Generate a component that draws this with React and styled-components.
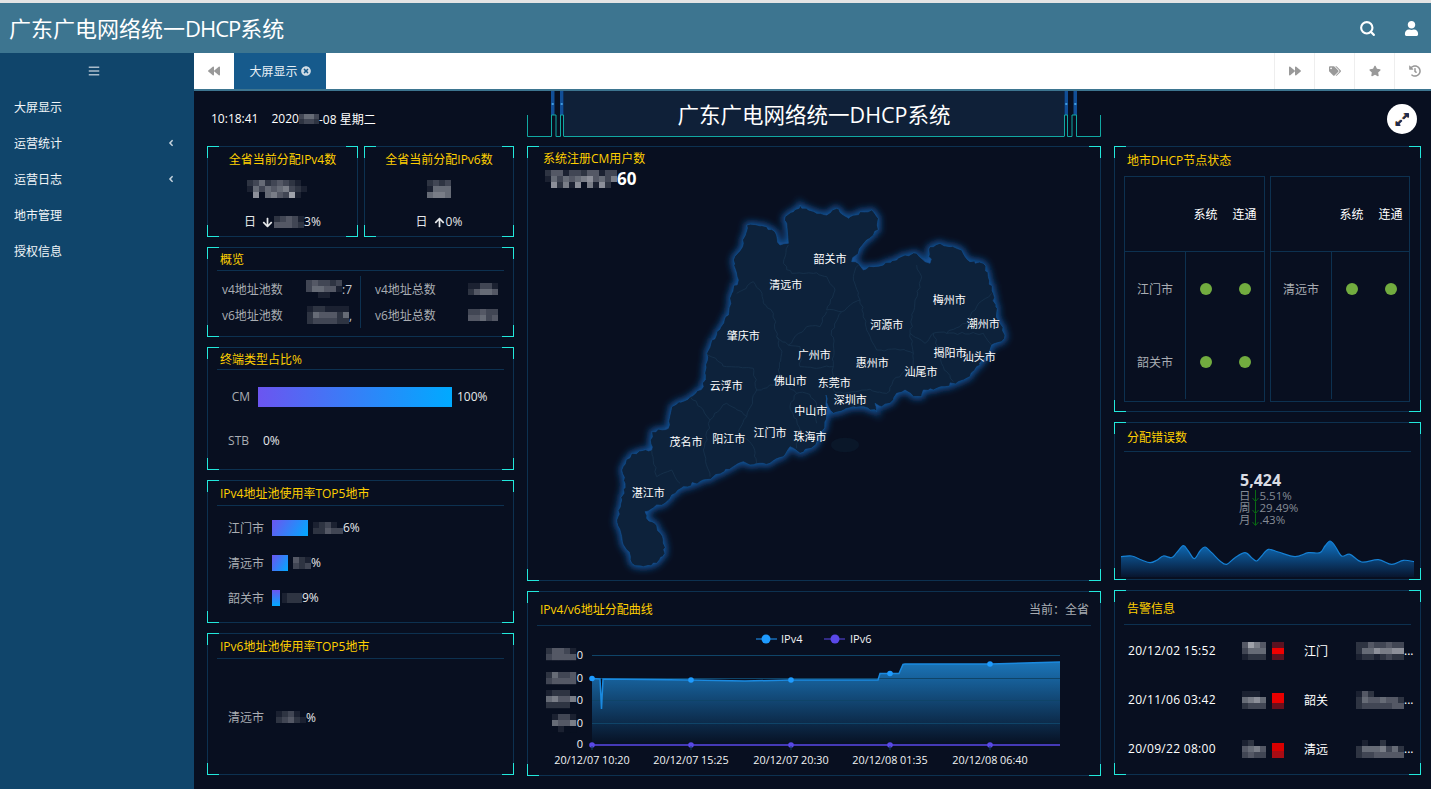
import React from "react";
import styled, { createGlobalStyle } from "styled-components";
import { Search } from "lucide-react";
import {
  FaUser, FaBars, FaBackward, FaForward, FaTags, FaStar, FaHistory,
  FaAngleLeft, FaTimesCircle, FaExpandAlt, FaArrowDown, FaArrowUp,
} from "react-icons/fa";

const GlobalStyle = createGlobalStyle`
  html, body { margin: 0; padding: 0; height: 100%; overflow: hidden; }
  body {
    background: #080f20;
    font-family: "Open Sans", "Noto Sans CJK SC", "Liberation Sans", sans-serif;
    font-size: 12px;
    color: #fff;
  }
  * { box-sizing: border-box; }
`;

const CORNER = "#22e8dc";
const LINE = "#0d3150";
const YELLOW = "#ffcf00";

const Page = styled.div`
  width: 1431px;
  height: 789px;
  display: flex;
  flex-direction: column;
  overflow: hidden;
`;

const TopBar = styled.header`
  height: 53px;
  flex: none;
  background: #3d7590;
  border-top: 3px solid #e4e4e4;
  display: flex;
  align-items: center;
  padding: 0 12px 0 9px;
  h1 {
    margin: 0;
    flex: 1;
    font-size: 22px;
    font-weight: 400;
    line-height: 50px;
  }
`;

const Tight = styled.span`
  letter-spacing: -1px;
`;

const TopIcon = styled.span`
  display: flex;
  margin-left: 28px;
  font-size: 15px;
`;

const Body = styled.div`
  flex: 1;
  display: flex;
  min-height: 0;
`;

const Sidebar = styled.aside`
  width: 194px;
  flex: none;
  background: #10456b;
`;

const Burger = styled.div`
  height: 36px;
  display: flex;
  align-items: center;
  justify-content: center;
  padding-right: 6px;
  color: #a9bccb;
  font-size: 12px;
`;

const MenuItem = styled.div`
  height: 36px;
  display: flex;
  align-items: center;
  justify-content: space-between;
  padding: 0 18px 0 14px;
  font-size: 12px;
  color: #f1f5f8;
  svg { font-size: 10px; color: #c4d2dc; }
`;

const Main = styled.main`
  flex: 1;
  display: flex;
  flex-direction: column;
  min-width: 0;
`;

const TabBar = styled.nav`
  height: 38px;
  flex: none;
  margin-right: -3px;
  background: #fff;
  border-bottom: 2px solid #3d7590;
  display: flex;
`;

const TabButton = styled.div`
  width: 40px;
  display: flex;
  align-items: center;
  justify-content: center;
  color: #999;
  font-size: 12px;
  border-left: ${(p) => (p.$bordered ? "1px solid #eee" : "none")};
`;

const ActiveTab = styled.div`
  width: 92px;
  background: #165a8c;
  color: #e8f0f6;
  display: flex;
  align-items: center;
  justify-content: center;
  gap: 3px;
  svg { font-size: 10px; color: #cfdbe4; }
`;

const TabSpacer = styled.div`
  flex: 1;
`;

const Content = styled.div`
  flex: 1;
  background: #080f20;
  display: grid;
  grid-template-columns: 307px 574px 307px;
  grid-template-rows: 55px 1fr;
  column-gap: 13px;
  padding: 0 10px 0 13px;
`;

const Clock = styled.div`
  display: flex;
  align-items: center;
  gap: 13px;
  padding: 0 0 0 4px;
  font-size: 12px;
  color: #fff;
`;

const ClockDate = styled.span`
  display: flex;
  align-items: center;
  white-space: pre;
`;

const Banner = styled.div`
  display: flex;
  height: 46px;
`;

const BannerTitle = styled.div`
  flex: 1;
  background: #0f2038;
  border-bottom: 1px solid #11a8a2;
  display: flex;
  align-items: center;
  justify-content: center;
  font-size: 21.5px;
  padding-bottom: 1px;
`;

const ExpandCell = styled.div`
  display: flex;
  justify-content: flex-end;
  align-items: flex-start;
  padding: 13px 4px 0 0;
`;

const ExpandButton = styled.div`
  width: 30px;
  height: 30px;
  border-radius: 50%;
  background: #fff;
  color: #1b2a55;
  display: flex;
  align-items: center;
  justify-content: center;
  font-size: 15px;
  svg { filter: drop-shadow(-0.7px 0.7px 0 #d98a2e); }
`;

const Column = styled.div`
  display: grid;
  grid-template-rows: ${(p) => p.$rows};
  row-gap: 10px;
  align-content: start;
`;

const Pair = styled.div`
  display: grid;
  grid-template-columns: 151px 150px;
  column-gap: 6px;
`;

const corner = (pos, w, h) => `linear-gradient(${CORNER}, ${CORNER}) ${pos} / ${w} ${h} no-repeat`;
const edge = (pos, w, h) => `linear-gradient(${LINE}, ${LINE}) ${pos} / ${w} ${h} no-repeat`;

const Panel = styled.section`
  padding: 1px;
  min-width: 0;
  background:
    ${corner("left top", "12px", "1px")},
    ${corner("left top", "1px", "12px")},
    ${corner("right top", "12px", "1px")},
    ${corner("right top", "1px", "12px")},
    ${corner("left bottom", "12px", "1px")},
    ${corner("left bottom", "1px", "12px")},
    ${corner("right bottom", "12px", "1px")},
    ${corner("right bottom", "1px", "12px")},
    ${edge("left top", "100%", "1px")},
    ${edge("left bottom", "100%", "1px")},
    ${edge("left top", "1px", "100%")},
    ${edge("right top", "1px", "100%")};
  display: flex;
  flex-direction: column;
`;

const PanelHead = styled.div`
  height: ${(p) => p.$h || 25}px;
  flex: none;
  margin: 0 9px;
  padding: 0 2px 0 3px;
  border-bottom: 1px solid ${LINE};
  display: flex;
  align-items: center;
  justify-content: space-between;
  color: ${YELLOW};
  font-size: 12px;
  span { color: #a9adb3; }
`;

const StatPanel = styled(Panel)`
  align-items: center;
  padding-top: 5px;
`;

const StatTitle = styled.div`
  color: ${YELLOW};
  line-height: 18px;
`;

const StatValue = styled.div`
  height: 18px;
  margin-top: 11px;
  display: flex;
  justify-content: center;
`;

const StatTrend = styled.div`
  margin-top: 16px;
  display: flex;
  align-items: center;
  line-height: 16px;
  color: #e6e8ea;
  svg { font-size: 11px; margin: 0 1px 0 6px; }
`;

const Overview = styled.div`
  flex: 1;
  display: grid;
  grid-template-columns: 1fr 1fr;
  padding: 5px 15px 8px 14px;
`;

const OverviewSide = styled.div`
  display: grid;
  grid-template-rows: 1fr 1fr;
  padding-left: ${(p) => (p.$right ? "14px" : "0")};
  border-left: ${(p) => (p.$right ? `1px solid ${LINE}` : "none")};
`;

const OverviewRow = styled.div`
  display: flex;
  align-items: center;
  justify-content: space-between;
  color: #a9adb3;
  padding-right: ${(p) => (p.$right ? "0" : "8px")};
  b { display: flex; align-items: center; font-weight: 400; color: #c8cbd0; }
`;

const Bars = styled.div`
  flex: 1;
  display: flex;
  flex-direction: column;
  justify-content: center;
  padding: ${(p) => p.$pt || 0}px 0 ${(p) => p.$pb || 0}px;
  gap: ${(p) => p.$gap || 0}px;
`;

const BarRow = styled.div`
  display: flex;
  align-items: center;
  height: 20px;
`;

const BarLabel = styled.div`
  width: ${(p) => p.$w}px;
  flex: none;
  text-align: right;
  color: #a9adb3;
`;

const Bar = styled.div`
  height: ${(p) => p.$h}px;
  width: ${(p) => p.$w}px;
  flex: none;
  margin-left: 8px;
  background: linear-gradient(${(p) => p.$angle || "90deg"}, #6b55f0, #00aaff);
`;

const BarValue = styled.div`
  margin-left: ${(p) => p.$ml ?? 5}px;
  display: flex;
  align-items: center;
  color: #e6e8ea;
`;

const MapHead = styled.div`
  height: 42.5px;
  flex: none;
  padding: 3px 0 0 15px;
  color: ${YELLOW};
  line-height: 17px;
`;

const MapCount = styled.div`
  display: flex;
  align-items: center;
  margin: 3px 0 0 2px;
  color: #fff;
  font-size: 17px;
  font-weight: 700;
  line-height: 18px;
`;

const MapCanvas = styled.div`
  position: relative;
  width: 420px;
  height: 390px;
  margin-left: 72px;
  svg { display: block; overflow: visible; }
`;

const MapLabel = styled.span`
  position: absolute;
  transform: translate(-50%, -50%);
  font-size: 11px;
  color: #fff;
  white-space: nowrap;
`;

const NodeHead = styled.div`
  height: 29px;
  flex: none;
  padding: 5px 0 0 12px;
  color: ${YELLOW};
  line-height: 17px;
`;

const NodeTables = styled.div`
  display: grid;
  grid-template-columns: 141px 140px;
  column-gap: 5px;
  margin-left: 9px;
`;

const NodeTable = styled.div`
  height: 226px;
  border: 1px solid ${LINE};
  display: grid;
  grid-template-rows: 74px 74px 74px;
`;

const NodeRow = styled.div`
  display: grid;
  grid-template-columns: 61px 39px 39px;
  align-items: center;
  justify-items: center;
  border-top: ${(p) => (p.$first ? `1px solid ${LINE}` : "none")};
  color: ${(p) => (p.$head ? "#fff" : "#a9adb3")};
`;

const NodeCity = styled.div`
  align-self: stretch;
  justify-self: stretch;
  display: flex;
  align-items: center;
  justify-content: center;
  border-right: 1px solid ${LINE};
`;

const Dot = styled.i`
  width: 12px;
  height: 12px;
  border-radius: 50%;
  background: #72ac3f;
`;

const ErrorBody = styled.div`
  flex: 1;
  display: flex;
  flex-direction: column;
  align-items: flex-start;
  padding: 19px 0 0 124px;
  position: relative;
`;

const ErrorTotal = styled.div`
  font-size: 16px;
  font-weight: 700;
  line-height: 18px;
  margin-left: 1px;
  color: #d9dce3;
`;

const ErrorLine = styled.div`
  display: flex;
  align-items: center;
  height: 12px;
  line-height: 12px;
  font-size: 11.5px;
  color: #858b95;
  margin-top: ${(p) => (p.$first ? "1px" : "0")};
  svg { margin: 0 1px 0 1px; }
`;

const SparkWrap = styled.svg`
  position: absolute;
  left: 6px;
  bottom: 2px;
`;

const AlertList = styled.div`
  flex: 1;
  display: grid;
  grid-template-rows: repeat(3, 49px);
  padding: 1px 5px 0 13px;
`;

const AlertRow = styled.div`
  display: flex;
  align-items: center;
  color: #fff;
`;

const AlertTime = styled.div`
  width: 114px;
  flex: none;
  letter-spacing: 0.3px;
`;

const Alarm = styled.div`
  width: 12px;
  height: 18px;
  margin: 0 20px 0 6px;
  flex: none;
  background: ${(p) => p.$bg};
`;

const AlertCity = styled.div`
  width: 52px;
  flex: none;
`;

const AlertMore = styled.div`
  display: flex;
  align-items: center;
`;

const Grid = styled.span`
  display: inline-grid;
  grid-template-columns: repeat(${(p) => p.$cols}, ${(p) => p.$size}px);
  grid-auto-rows: ${(p) => p.$size}px;
  flex: none;
`;

const Tile = styled.span`
  background: ${(p) => p.$c};
`;

const shade = (d) => {
  const t = Number(d) / 9;
  const r = Math.round(8 + t * 170);
  const g = Math.round(15 + t * 165);
  const b = Math.round(32 + t * 155);
  return `rgb(${r},${g},${b})`;
};

// the screenshot hides some figures under a mosaic: each digit is one tile
function Mosaic({ rows, size = 6 }) {
  const lines = rows.split("|");
  return (
    <Grid $cols={lines[0].length} $size={size}>
      {lines.join("").split("").map((d, i) => <Tile key={i} $c={shade(d)} />)}
    </Grid>
  );
}

function SvgMosaic({ x, y, rows }) {
  return rows.split("|").flatMap((line, r) =>
    line.split("").map((d, c) => (
      <rect key={`${r}-${c}`} x={x + c * 6} y={y + r * 6} width="6.2" height="6.2" fill={shade(d)} />
    ))
  );
}

const smooth = (pts) => {
  let d = `M${pts[0][0]},${pts[0][1]}`;
  for (let i = 0; i < pts.length - 1; i++) {
    const p0 = pts[i - 1] || pts[i];
    const p1 = pts[i];
    const p2 = pts[i + 1];
    const p3 = pts[i + 2] || p2;
    d += ` C${p1[0] + (p2[0] - p0[0]) / 6},${p1[1] + (p2[1] - p0[1]) / 6} ${p2[0] - (p3[0] - p1[0]) / 6},${p2[1] - (p3[1] - p1[1]) / 6} ${p2[0]},${p2[1]}`;
  }
  return d;
};

// breaks the straight map segments up so that borders wander like a real map
const roughen = (d, amp) => {
  let out = "";
  let prev = null;
  let n = 1;
  const noise = () => {
    n += 1;
    const v = Math.sin(n * 12.9898) * 43758.5453;
    return (v - Math.floor(v) - 0.5) * amp;
  };
  for (const [, cmd, sx, sy] of d.matchAll(/([MLZ])(?:(\d+),(\d+))?/g)) {
    if (cmd === "Z") { out += " Z"; continue; }
    const x = Number(sx);
    const y = Number(sy);
    if (cmd === "L" && prev) {
      const steps = Math.max(1, Math.round(Math.hypot(x - prev[0], y - prev[1]) / 11));
      for (let i = 1; i < steps; i++) {
        const t = i / steps;
        out += ` L${(prev[0] + (x - prev[0]) * t + noise()).toFixed(1)},${(prev[1] + (y - prev[1]) * t + noise()).toFixed(1)}`;
      }
    }
    out += ` ${cmd}${x},${y}`;
    prev = [x, y];
  }
  return out;
};

const GD_OUTLINE = roughen("M560,100 L555,80 L580,65 L600,45 L625,60 L650,70 L680,75 L710,55 L730,75 L745,85 L780,65 L815,60 L835,85 L835,120 L800,150 L775,190 L755,215 L775,220 L790,240 L820,230 L850,225 L890,210 L915,195 L950,190 L975,215 L990,220 L990,170 L1020,160 L1050,170 L1085,180 L1110,215 L1150,220 L1165,260 L1180,310 L1190,370 L1200,400 L1215,435 L1205,455 L1175,465 L1170,480 L1150,510 L1130,530 L1110,560 L1075,575 L1035,590 L1000,600 L970,600 L965,620 L940,620 L915,600 L890,610 L870,640 L845,650 L825,640 L830,665 L810,660 L790,650 L760,650 L700,670 L685,650 L678,615 L680,680 L660,740 L640,770 L600,790 L570,770 L550,800 L510,820 L490,820 L450,825 L430,815 L400,830 L340,860 L300,875 L250,890 L215,915 L195,940 L170,945 L135,965 L140,985 L165,1000 L190,1050 L195,1090 L170,1120 L130,1130 L95,1120 L80,1080 L65,1040 L50,990 L65,930 L75,880 L65,840 L95,790 L155,780 L155,725 L205,715 L215,650 L270,620 L310,590 L320,490 L350,425 L385,375 L395,310 L415,270 L400,210 L430,160 L440,105 L500,110 L525,125 L540,165 L565,160 Z", 9);

const GD_BORDERS = [
  "M565,165 L550,220 L575,250 L640,250 L680,260 L705,300 L680,360 L725,365 L780,330 L760,260 L775,225",
  "M725,365 L695,420 L700,465 L700,530 M780,330 L790,370 L800,420 L830,480 L900,480 L940,490",
  "M950,225 L965,260 L945,330 L930,430 L940,490 M930,430 L975,460 L1000,430 L1040,430 L1100,400 L1130,350 L1175,310",
  "M480,300 L460,275 L410,310 M480,300 L490,340 L520,370 L530,440 L565,465 L620,410 L660,410 L680,365",
  "M565,465 L600,470 L600,530 L650,535 L700,530 M530,440 L545,490 L535,540 L555,580 L590,610 L620,610 L650,640 L650,700",
  "M320,490 L380,530 L460,535 L470,600 L530,580 M470,600 L440,680 L380,640 L330,690 L310,660 L270,620",
  "M440,680 L415,725 L460,770 L470,820 M330,690 L310,780 L330,860 M155,780 L170,860 L215,840 L240,880 M590,610 L570,650 L600,720 L590,775",
  "M700,530 L700,600 L730,610 L800,600 L860,610 L880,570 L940,530 L940,490 M1000,430 L1030,530 L1060,575 M1040,430 L1150,430 L1175,465",
].map((d) => roughen(d, 8));

const CITIES = [
  ["韶关市", 690, 205], ["清远市", 557, 283], ["梅州市", 1048, 327], ["潮州市", 1150, 400],
  ["河源市", 860, 402], ["肇庆市", 430, 435], ["广州市", 643, 492], ["揭阳市", 1050, 486],
  ["汕头市", 1138, 498], ["惠州市", 817, 516], ["汕尾市", 963, 543], ["佛山市", 571, 571],
  ["东莞市", 703, 576], ["云浮市", 379, 585], ["深圳市", 751, 627], ["中山市", 632, 660],
  ["江门市", 510, 727], ["珠海市", 630, 738], ["阳江市", 386, 744], ["茂名市", 258, 753],
  ["湛江市", 145, 908],
];

function GuangdongMap() {
  return (
    <MapCanvas>
      <svg width="420" height="390" viewBox="0 0 1260 1170">
        <defs>
          <filter id="gdGlow" x="-10%" y="-10%" width="120%" height="120%">
            <feGaussianBlur stdDeviation="11" />
          </filter>
          <filter id="gdInner" x="-10%" y="-10%" width="120%" height="120%">
            <feGaussianBlur stdDeviation="2" />
          </filter>
        </defs>
        <path d={GD_OUTLINE} fill="#14579f" stroke="#14579f" strokeWidth="14" filter="url(#gdGlow)" />
        <path d={GD_OUTLINE} fill="#10223a" stroke="#134d8c" strokeWidth="2" strokeLinejoin="round" filter="url(#gdInner)" />
        {GD_BORDERS.map((d) => (
          <path key={d} d={d} fill="none" stroke="#1a3652" strokeWidth="2" />
        ))}
        <ellipse cx="735" cy="765" rx="42" ry="22" fill="#0a1729" />
      </svg>
      {CITIES.map(([name, x, y]) => (
        <MapLabel key={name} style={{ left: x / 3, top: y / 3 }}>{name}</MapLabel>
      ))}
    </MapCanvas>
  );
}

function BannerDeco({ flip }) {
  return (
    <svg width="37" height="46" viewBox="0 0 37 46" style={{ transform: flip ? "scaleX(-1)" : "none", flex: "none" }}>
      <rect x="24" y="0" width="3.5" height="24" fill="#114e96" />
      <rect x="33" y="0" width="3.5" height="24" fill="#114e96" />
      <rect x="24.7" y="12" width="2" height="2" fill="#3f9be0" />
      <rect x="33.7" y="12" width="2" height="2" fill="#3f9be0" />
      <path d="M0.5,24 V45.5 H24.5 V24 M24.5,24 H29 V45.5 H33.5 V24 H36.5 V45.5" fill="none" stroke="#11a8a2" strokeWidth="1" />
    </svg>
  );
}

function ThinDown() {
  return (
    <svg width="7" height="12" viewBox="0 0 7 12">
      <path d="M3.5,0 V11 M0.5,8 L3.5,11.5 L6.5,8" fill="none" stroke="#0a6a14" strokeWidth="1" />
    </svg>
  );
}

const LINE_POINTS = "592,678.5 600,679 601.5,709 603,679 691,680 745,681 791,680 878,680 880,673.5 899,673.5 903,664.5 905,664 990,664 1060,662";
const MARKS = [592, 691, 791, 890, 990];
const MARK_Y = [678.5, 680, 680, 673.5, 664];
const STAMPS = ["20/12/07 10:20", "20/12/07 15:25", "20/12/07 20:30", "20/12/08 01:35", "20/12/08 06:40"];

function AddressChart() {
  return (
    <svg width="572" height="149" viewBox="528 626 572 149" style={{ display: "block", flex: "none" }}>
      <defs>
        <linearGradient id="areaFill" x1="0" y1="0" x2="0" y2="1">
          <stop offset="0" stopColor="#1b75b9" />
          <stop offset="1" stopColor="#071022" />
        </linearGradient>
      </defs>
      <polygon points={`${LINE_POINTS} 1060,745 592,745`} fill="url(#areaFill)" />
      {[655, 678, 700, 723].map((y) => (
        <line key={y} x1="592" x2="1060" y1={y + 0.5} y2={y + 0.5} stroke="#0f4468" strokeWidth="1" />
      ))}
      <polyline points={LINE_POINTS} fill="none" stroke="#1a8ae0" strokeWidth="1.5" />
      <line x1="592" x2="1060" y1="745" y2="745" stroke="#5a48e8" strokeWidth="1.5" />
      {MARKS.map((x, i) => (
        <g key={x}>
          <circle cx={x} cy={MARK_Y[i]} r="2.8" fill="#1e9bff" />
          <circle cx={x} cy="745" r="2.8" fill="#5a48e8" />
          <line x1={x} x2={x} y1="746" y2="750" stroke="#0f4468" />
          <text x={x} y="764" fontSize="10.8" fill="#f2f3f5" textAnchor="middle">{STAMPS[i]}</text>
        </g>
      ))}
      <SvgMosaic x={546} y={648} rows="24431|34444" />
      <SvgMosaic x={546} y={672} rows="25334|34444" />
      <SvgMosaic x={546} y={690} rows="12220|56446|22220" />
      <SvgMosaic x={552} y={714} rows="1331|5446|0100" />
      {[659, 682, 704, 727, 748].map((y) => (
        <text key={y} x="583" y={y} fontSize="11" fill="#f2f3f5" textAnchor="end">0</text>
      ))}
      <line x1="756" x2="777" y1="639" y2="639" stroke="#1e9bff" />
      <circle cx="766" cy="639" r="4.5" fill="#1e9bff" />
      <text x="781" y="643" fontSize="11" fill="#f2f3f5">IPv4</text>
      <line x1="824" x2="845" y1="639" y2="639" stroke="#5a48e8" />
      <circle cx="835" cy="639" r="4.5" fill="#5a48e8" />
      <text x="850" y="643" fontSize="11" fill="#f2f3f5">IPv6</text>
    </svg>
  );
}

const SPARK = [[0,427],[32,425],[62,437],[87,445],[107,438],[127,425],[152,430],[167,415],[187,394],[202,410],[220,433],[237,410],[252,398],[272,415],[297,440],[317,450],[342,430],[372,415],[392,430],[407,440],[422,425],[442,405],[472,413],[522,427],[562,415],[597,415],[612,395],[627,380],[642,395],[662,425],[687,420],[722,443],[772,436],[812,450],[847,438],[879,442]]
  .map(([x, y]) => [x / 3, (y - 365) / 3]);

function Sparkline() {
  const top = smooth(SPARK);
  return (
    <SparkWrap width="293" height="41" viewBox="0 0 293 41">
      <defs>
        <linearGradient id="sparkFill" x1="0" y1="0" x2="0" y2="1">
          <stop offset="0" stopColor="#0f73c4" />
          <stop offset="1" stopColor="#08152e" />
        </linearGradient>
      </defs>
      <path d={`${top} L293,41 L0,41 Z`} fill="url(#sparkFill)" />
      <path d={top} fill="none" stroke="#1580d4" strokeWidth="1.2" />
    </SparkWrap>
  );
}

function NodeStatus({ city, second }) {
  return (
    <NodeTable>
      <NodeRow $head>
        <span />
        <span>系统</span>
        <span>连通</span>
      </NodeRow>
      <NodeRow $first>
        <NodeCity>{city}</NodeCity>
        <Dot />
        <Dot />
      </NodeRow>
      <NodeRow>
        <NodeCity>{second}</NodeCity>
        {second && <Dot />}
        {second && <Dot />}
      </NodeRow>
    </NodeTable>
  );
}

const ALERTS = [
  { time: "20/12/02 15:52", city: "江门", alarm: "linear-gradient(#5c1220 33%, #f00000 33%, #f00000 66%, #5c1220 66%)", a: "4864|3555|1222", b: "22433433|25576677|12212322" },
  { time: "20/11/06 03:42", city: "韶关", alarm: "linear-gradient(#080f20 12%, #e80000 12%, #e80000 66%, #6a0f1c 66%)", a: "1110|5675|2333", b: "14200000|25445442|23333344" },
  { time: "20/09/22 08:00", city: "清远", alarm: "linear-gradient(#080f20 18%, #d80000 18%, #d80000 60%, #a80c14 60%)", a: "1200|4564|3433", b: "01002000|25556352|23344444" },
];

export default function App() {
  return (
    <Page>
      <GlobalStyle />
      <TopBar>
        <h1>广东广电网络统一<Tight>DHCP</Tight>系统</h1>
        <TopIcon><Search size={17} strokeWidth={3} /></TopIcon>
        <TopIcon><FaUser /></TopIcon>
      </TopBar>
      <Body>
        <Sidebar>
          <Burger><FaBars /></Burger>
          <MenuItem>大屏显示</MenuItem>
          <MenuItem>运营统计<FaAngleLeft /></MenuItem>
          <MenuItem>运营日志<FaAngleLeft /></MenuItem>
          <MenuItem>地市管理</MenuItem>
          <MenuItem>授权信息</MenuItem>
        </Sidebar>
        <Main>
          <TabBar>
            <TabButton><FaBackward /></TabButton>
            <ActiveTab>大屏显示<FaTimesCircle /></ActiveTab>
            <TabSpacer />
            <TabButton $bordered><FaForward /></TabButton>
            <TabButton $bordered><FaTags /></TabButton>
            <TabButton $bordered><FaStar /></TabButton>
            <TabButton $bordered><FaHistory /></TabButton>
          </TabBar>
          <Content>
            <Clock>
              <span>10:18:41</span>
              <ClockDate>2020<Mosaic rows="3553|2332" size={5} />-08 星期二</ClockDate>
            </Clock>
            <Banner>
              <BannerDeco />
              <BannerTitle>广东广电网络统一DHCP系统</BannerTitle>
              <BannerDeco flip />
            </Banner>
            <ExpandCell>
              <ExpandButton><FaExpandAlt /></ExpandButton>
            </ExpandCell>

            <Column $rows="91px 90px 123px 143px 142px">
              <Pair>
                <StatPanel>
                  <StatTitle>全省当前分配IPv4数</StatTitle>
                  <StatValue><Mosaic rows="235234321000|153545632100|070564381000" /></StatValue>
                  <StatTrend>日<FaArrowDown /><Mosaic rows="23431|44432" size={6} />3%</StatTrend>
                </StatPanel>
                <StatPanel>
                  <StatTitle>全省当前分配IPv6数</StatTitle>
                  <StatValue><Mosaic rows="2323|1555|5665" /></StatValue>
                  <StatTrend>日<FaArrowUp />0%</StatTrend>
                </StatPanel>
              </Pair>
              <Panel>
                <PanelHead $h={23}>概览</PanelHead>
                <Overview>
                  <OverviewSide>
                    <OverviewRow>v4地址池数<b><Mosaic rows="343323|355441|001100" />:7</b></OverviewRow>
                    <OverviewRow>v6地址池数<b><Mosaic rows="1221111|2544425|2333322" />,</b></OverviewRow>
                  </OverviewSide>
                  <OverviewSide $right>
                    <OverviewRow $right>v4地址总数<b><Mosaic rows="11331|24554" size={6} /></b></OverviewRow>
                    <OverviewRow $right>v6地址总数<b><Mosaic rows="33433|44534" size={6} /></b></OverviewRow>
                  </OverviewSide>
                </Overview>
              </Panel>
              <Panel>
                <PanelHead $h={22}>终端类型占比%</PanelHead>
                <Bars $gap={24} $pb={2}>
                  <BarRow>
                    <BarLabel $w={42}>CM</BarLabel>
                    <Bar $h={20} $w={194} />
                    <BarValue>100%</BarValue>
                  </BarRow>
                  <BarRow>
                    <BarLabel $w={41}>STB</BarLabel>
                    <BarValue $ml={14}>0%</BarValue>
                  </BarRow>
                </Bars>
              </Panel>
              <Panel>
                <PanelHead>IPv4地址池使用率TOP5地市</PanelHead>
                <Bars $gap={15} $pb={3}>
                  <BarRow>
                    <BarLabel $w={56}>江门市</BarLabel>
                    <Bar $h={16} $w={36} $angle="120deg" />
                    <BarValue><Mosaic rows="12310|22433" size={6} />6%</BarValue>
                  </BarRow>
                  <BarRow>
                    <BarLabel $w={56}>清远市</BarLabel>
                    <Bar $h={16} $w={16} $angle="120deg" />
                    <BarValue><Mosaic rows="421|323" size={6} />%</BarValue>
                  </BarRow>
                  <BarRow>
                    <BarLabel $w={56}>韶关市</BarLabel>
                    <Bar $h={16} $w={8} $angle="180deg" />
                    <BarValue $ml={2}><Mosaic rows="1222|1222" size={5} />9%</BarValue>
                  </BarRow>
                </Bars>
              </Panel>
              <Panel>
                <PanelHead>IPv6地址池使用率TOP5地市</PanelHead>
                <Bars $pt={1}>
                  <BarRow>
                    <BarLabel $w={56}>清远市</BarLabel>
                    <BarValue $ml={12}><Mosaic rows="12310|23421" size={6} />%</BarValue>
                  </BarRow>
                </Bars>
              </Panel>
            </Column>

            <Column $rows="435px 185px">
              <Panel>
                <MapHead>
                  系统注册CM用户数
                  <MapCount><Mosaic rows="244133244133|153545674536|072617061720" />60</MapCount>
                </MapHead>
                <GuangdongMap />
              </Panel>
              <Panel>
                <PanelHead $h={34}>IPv4/v6地址分配曲线<span>当前：全省</span></PanelHead>
                <AddressChart />
              </Panel>
            </Column>

            <Column $rows="266px 158px 185px">
              <Panel>
                <NodeHead>地市DHCP节点状态</NodeHead>
                <NodeTables>
                  <NodeStatus city="江门市" second="韶关市" />
                  <NodeStatus city="清远市" />
                </NodeTables>
              </Panel>
              <Panel>
                <PanelHead $h={29}>分配错误数</PanelHead>
                <ErrorBody>
                  <ErrorTotal>5,424</ErrorTotal>
                  <ErrorLine $first>日<ThinDown />5.51%</ErrorLine>
                  <ErrorLine>周<ThinDown />29.49%</ErrorLine>
                  <ErrorLine>月<ThinDown />.43%</ErrorLine>
                  <Sparkline />
                </ErrorBody>
              </Panel>
              <Panel>
                <PanelHead $h={34}>告警信息</PanelHead>
                <AlertList>
                  {ALERTS.map((row) => (
                    <AlertRow key={row.time}>
                      <AlertTime>{row.time}</AlertTime>
                      <Mosaic rows={row.a} />
                      <Alarm $bg={row.alarm} />
                      <AlertCity>{row.city}</AlertCity>
                      <AlertMore><Mosaic rows={row.b} />{"..."}</AlertMore>
                    </AlertRow>
                  ))}
                </AlertList>
              </Panel>
            </Column>
          </Content>
        </Main>
      </Body>
    </Page>
  );
}
